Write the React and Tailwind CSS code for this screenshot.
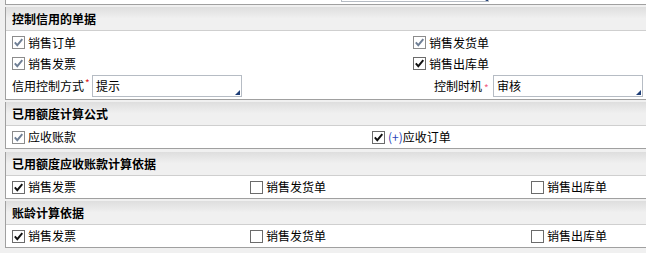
import React from "react";

const FONT = { fontFamily: '"Noto Sans CJK SC", "Noto Sans", sans-serif' };

function Check({ checked, disabled }) {
  return (
    <span
      className={
        "relative inline-block w-[13px] h-[13px] shrink-0 bg-white border " +
        (disabled ? "border-[#8c8c8c]" : "border-[#6b6b6b]")
      }
    >
      {checked && (
        <svg className="absolute left-0 top-0" width="11" height="11" viewBox="0 0 11 11">
          <path
            d="M1.8 5.3 L4.3 8.2 L9.3 2.2"
            fill="none"
            stroke={disabled ? "#6f7f95" : "#101010"}
            strokeWidth="1.9"
          />
        </svg>
      )}
    </span>
  );
}

function Item({ checked, disabled, children, className = "" }) {
  return (
    <div className={"flex items-center gap-[3px] " + className}>
      <Check checked={checked} disabled={disabled} />
      <span className="text-[12px] leading-none text-black">{children}</span>
    </div>
  );
}

function Header({ title }) {
  return (
    <div className="h-[24px] flex items-center pl-[6px] border-b border-[#cfcfcf] bg-gradient-to-b from-[#dedede] via-[#f0f0f0] to-[#f0f0f0]">
      <span className="text-[12px] font-bold leading-none text-black">{title}</span>
    </div>
  );
}

function Panel({ title, children, className = "" }) {
  return (
    <div className={"ml-[5px] border-l border-b border-[#a0a0a0] " + className}>
      <Header title={title} />
      <div className="bg-white">{children}</div>
    </div>
  );
}

function Input({ value, className = "" }) {
  return (
    <div
      className={
        "relative h-[22px] bg-white border border-[#b6bcc4] flex items-center pl-[3px] " + className
      }
    >
      <span className="text-[12px] leading-none text-black">{value}</span>
      <svg className="absolute right-[1px] bottom-[1px]" width="5" height="5" viewBox="0 0 5 5">
        <path d="M5 0 L5 5 L0 5 Z" fill="#1f3f78" />
      </svg>
    </div>
  );
}

export default function App() {
  return (
    <div className="w-[646px] h-[253px] overflow-hidden bg-[#f0f0f0]" style={FONT}>
      {/* top remnant of previous panel */}
      <div className="ml-[5px] h-[5px] bg-white border-l border-b border-[#a0a0a0] relative">
        <div className="absolute left-[335px] top-0 w-[148px] h-[2px] border-b border-x border-[#b6bcc4]">
          <svg className="absolute right-0 bottom-0" width="3" height="2" viewBox="0 0 3 2">
            <path d="M3 0 L3 2 L0 2 Z" fill="#1f3f78" />
          </svg>
        </div>
      </div>

      <Panel title="控制信用的单据" className="mt-[2px]">
        <div className="pt-[1px] pb-[1px]">
          <div className="h-[21px] flex items-center pl-[6px]">
            <Item checked disabled className="w-[401px]">销售订单</Item>
            <Item checked disabled>销售发货单</Item>
          </div>
          <div className="h-[21px] flex items-center pl-[6px]">
            <Item checked disabled className="w-[401px]">销售发票</Item>
            <Item checked>销售出库单</Item>
          </div>
          <div className="h-[24px] flex items-center pl-[6px]">
            <span className="text-[12px] leading-none text-black">信用控制方式</span>
            <span className="text-[10px] leading-none text-[#e02020] self-start mt-[4px] ml-[1px] w-[6px]">*</span>
            <Input value="提示" className="w-[150px] ml-[1px]" />
            <div className="w-[250px] flex justify-end items-center">
              <span className="text-[12px] leading-none text-black">控制时机</span>
              <span className="text-[10px] leading-none text-[#f06080] self-start mt-[4px] ml-[2px] w-[8px]">*</span>
            </div>
            <Input value="审核" className="w-[150px] ml-[1px]" />
          </div>
        </div>
      </Panel>

      <Panel title="已用额度计算公式" className="mt-[2px]">
        <div className="h-[22px] flex items-center pl-[6px]">
          <Item checked disabled className="w-[360px]">应收账款</Item>
          <Item checked>
            <span className="text-[#2a45b8]">(+)</span>应收订单
          </Item>
        </div>
      </Panel>

      <Panel title="已用额度应收账款计算依据" className="mt-[3px]">
        <div className="h-[22px] flex items-center pl-[6px]">
          <Item checked className="w-[238px]">销售发票</Item>
          <Item className="w-[281px]">销售发货单</Item>
          <Item>销售出库单</Item>
        </div>
      </Panel>

      <Panel title="账龄计算依据" className="mt-[2px]">
        <div className="h-[22px] flex items-center pl-[6px]">
          <Item checked className="w-[238px]">销售发票</Item>
          <Item className="w-[281px]">销售发货单</Item>
          <Item>销售出库单</Item>
        </div>
      </Panel>
    </div>
  );
}
